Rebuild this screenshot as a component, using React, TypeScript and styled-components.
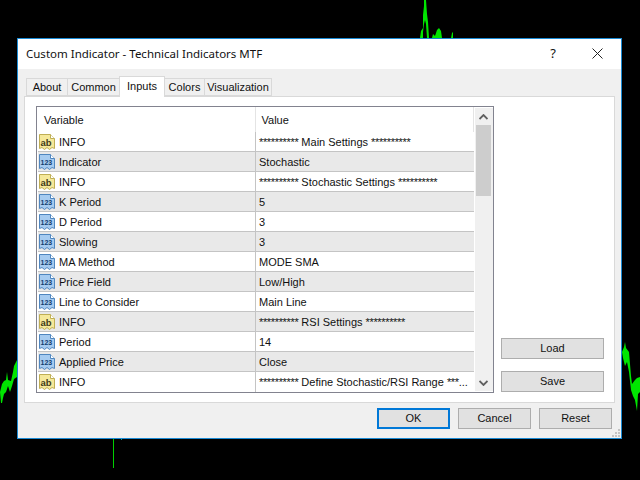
import styled, { createGlobalStyle } from "styled-components";

type Row = { kind: "ab" | "num"; name: string; value: string };

const rows: Row[] = [
  { kind: "ab", name: "INFO", value: "********** Main Settings **********" },
  { kind: "num", name: "Indicator", value: "Stochastic" },
  { kind: "ab", name: "INFO", value: "********** Stochastic Settings **********" },
  { kind: "num", name: "K Period", value: "5" },
  { kind: "num", name: "D Period", value: "3" },
  { kind: "num", name: "Slowing", value: "3" },
  { kind: "num", name: "MA Method", value: "MODE SMA" },
  { kind: "num", name: "Price Field", value: "Low/High" },
  { kind: "num", name: "Line to Consider", value: "Main Line" },
  { kind: "ab", name: "INFO", value: "********** RSI Settings **********" },
  { kind: "num", name: "Period", value: "14" },
  { kind: "num", name: "Applied Price", value: "Close" },
  { kind: "ab", name: "INFO", value: "********** Define Stochastic/RSI Range ***..." },
];

const tabs = [
  { label: "About", width: 42 },
  { label: "Common", width: 53 },
  { label: "Inputs", width: 46 },
  { label: "Colors", width: 41 },
  { label: "Visualization", width: 68 },
];

const TypeIcon = ({ kind }: { kind: Row["kind"] }) => {
  const ab = kind === "ab";
  const edge = ab ? "#bfae55" : "#4f86bf";
  return (
    <IconSvg width="16" height="16" viewBox="0 0 16 16">
      <path
        d="M0.5 0.5H11.5L15.5 4.5V14.5L13 13.5L10.5 15.5L8 13.5L5.5 15.5L3 13.5L0.5 14.5Z"
        fill={ab ? "#f5e89a" : "#a6cbf0"}
        stroke={edge}
      />
      <path d="M11.5 0.5V4.5H15.5" fill="#fff" stroke={edge} />
      {ab ? (
        <IconLabel x="1.5" y="11.5" fontSize="9.5" fill="#3f3a18">
          ab
        </IconLabel>
      ) : (
        <IconLabel x="1.5" y="11" fontSize="7" fill="#123d6e">
          123
        </IconLabel>
      )}
    </IconSvg>
  );
};

// the asterisk runs are tighter in the original font
const ValueText = ({ text }: { text: string }) => (
  <>
    {text.split(/(\*+)/).map((part, i) =>
      part.startsWith("*") ? <Stars key={i}>{part}</Stars> : <span key={i}>{part}</span>
    )}
  </>
);

export default function App() {
  return (
    <>
      <GlobalStyle />
      <Desktop>
        <Chart viewBox="0 0 640 480" width="640" height="480">
          <path
            d="M420 38L421 31L423 28L423 15L424 6L424 0L426 0L427 14L428 22L429 38H427L426 24L425 20L424 24L423 32V38ZM432 38L433 34L435 36L437 30L439 28L441 31L442 38ZM451 38L452 33L453 32V38Z"
            fill="#00e600"
          />
          <path
            d="M1 403L0 392L2 384L4 381L6 380L7 372L8 380L11 381L13 372L14 366L16 362L17 360V377L14 379L12 386L10 392L8 386L6 392L4 394L3 398L2 403Z"
            fill="#00e600"
          />
          <path
            d="M622 352L624 347L625 342L626 348L629 352L630 364L631 376L632 384L635 380L637 378L640 377V392L638 394L637 411L635 400L633 396L631 390L629 372L627 362L625 366L623 358Z"
            fill="#00e600"
          />
          <path d="M113.5 438V468" stroke="#00d000" fill="none" />
          <path d="M121 439h1v1h-1z" fill="#00a0a0" />
        </Chart>
        <Dialog>
          <TitleBar>
            <TitleText>Custom Indicator - Technical Indicators MTF</TitleText>
            <HelpGlyph>?</HelpGlyph>
            <CloseIcon width="11" height="11" viewBox="0 0 11 11">
              <path d="M0.5 0.5L10.5 10.5M10.5 0.5L0.5 10.5" stroke="#222" fill="none" />
            </CloseIcon>
          </TitleBar>
          <Body>
            <TabStrip>
              {tabs.map((tab) => (
                <Tab key={tab.label} $width={tab.width} $active={tab.label === "Inputs"}>
                  {tab.label}
                </Tab>
              ))}
            </TabStrip>
            <Panel>
              <Table>
                <Grid>
                  <HeaderRow>
                    <HeaderCell $w={218}>Variable</HeaderCell>
                    <HeaderCell $w={219}>Value</HeaderCell>
                  </HeaderRow>
                  {rows.map((row, i) => (
                    <DataRow key={i} $shaded={i % 2 === 1} $last={i === rows.length - 1}>
                      <NameCell>
                        <TypeIcon kind={row.kind} />
                        <span>{row.name}</span>
                      </NameCell>
                      <ValueCell>
                        <ValueText text={row.value} />
                      </ValueCell>
                    </DataRow>
                  ))}
                </Grid>
                <Scrollbar>
                  <ArrowBox>
                    <svg width="9" height="6" viewBox="0 0 9 6">
                      <path d="M0.5 5L4.5 1L8.5 5" stroke="#606060" strokeWidth="1.8" fill="none" />
                    </svg>
                  </ArrowBox>
                  <Thumb />
                  <Track />
                  <ArrowBox>
                    <svg width="9" height="6" viewBox="0 0 9 6">
                      <path d="M0.5 1L4.5 5L8.5 1" stroke="#606060" strokeWidth="1.8" fill="none" />
                    </svg>
                  </ArrowBox>
                </Scrollbar>
              </Table>
              <SideButtons>
                <Button $w={103}>Load</Button>
                <Button $w={103}>Save</Button>
              </SideButtons>
            </Panel>
            <Footer>
              <Button $w={73} $primary>
                OK
              </Button>
              <Button $w={73}>Cancel</Button>
              <Button $w={73}>Reset</Button>
            </Footer>
            <Grip width="10" height="10" viewBox="0 0 10 10">
              <path d="M7 1h2v2H7zM4 4h2v2H4zM7 4h2v2H7zM1 7h2v2H1zM4 7h2v2H4zM7 7h2v2H7z" fill="#c4c4c4" />
            </Grip>
          </Body>
        </Dialog>
      </Desktop>
    </>
  );
}

const GlobalStyle = createGlobalStyle`
  html, body {
    margin: 0;
    background: #000;
  }
  * {
    box-sizing: border-box;
  }
`;

const Desktop = styled.div`
  position: relative;
  width: 640px;
  height: 480px;
  overflow: hidden;
  background: #000;
  font-family: "Liberation Sans", Arial, sans-serif;
  font-size: 11px;
  color: #111;
`;

const Chart = styled.svg`
  position: absolute;
  left: 0;
  top: 0;
`;

const IconSvg = styled.svg`
  flex: none;
  display: block;
`;

const IconLabel = styled.text`
  font-family: "Liberation Sans", Arial, sans-serif;
  font-weight: 700;
`;

const Stars = styled.span`
  letter-spacing: -0.35px;
`;

const Dialog = styled.div`
  position: absolute;
  left: 17px;
  top: 38px;
  width: 605px;
  height: 401px;
  border: 1px solid #1a8ad4;
  display: flex;
  flex-direction: column;
  background: #f0f0f0;
`;

const TitleBar = styled.div`
  height: 30px;
  background: #fff;
  display: flex;
  align-items: center;
  padding: 0 18px 2px 8px;
`;

const TitleText = styled.div`
  flex: 1;
  font-family: "Noto Sans", sans-serif;
  font-size: 11.5px;
`;

const HelpGlyph = styled.div`
  font-family: "Noto Sans", sans-serif;
  font-size: 13px;
  margin-right: 36px;
`;

const CloseIcon = styled.svg`
  display: block;
`;

const Body = styled.div`
  position: relative;
  flex: 1;
  display: flex;
  flex-direction: column;
  padding: 9px 6px 0;
`;

const TabStrip = styled.div`
  display: flex;
  height: 18px;
  padding-left: 2px;
  position: relative;
  z-index: 1;
`;

const Tab = styled.div<{ $width: number; $active?: boolean }>`
  width: ${(p) => p.$width}px;
  height: ${(p) => (p.$active ? "21px" : "18px")};
  margin-top: ${(p) => (p.$active ? "-2px" : "0")};
  padding-bottom: ${(p) => (p.$active ? "3px" : "0")};
  display: flex;
  align-items: center;
  justify-content: center;
  background: ${(p) => (p.$active ? "#fff" : "#f0f0f0")};
  border: 1px solid #d9d9d9;
  border-bottom: ${(p) => (p.$active ? "none" : "1px solid #d9d9d9")};
  margin-right: -1px;
`;

const Panel = styled.div`
  width: 591px;
  height: 307px;
  background: #fff;
  border: 1px solid #d9d9d9;
  padding: 9px 10px 9px 11px;
  display: flex;
  justify-content: space-between;
`;

const Table = styled.div`
  width: 458px;
  height: 287px;
  border: 1px solid #82838f;
  display: flex;
`;

const Grid = styled.div`
  width: 437px;
  display: flex;
  flex-direction: column;
  padding-left: 1px;
`;

const HeaderRow = styled.div`
  height: 25px;
  display: flex;
`;

const HeaderCell = styled.div<{ $w: number }>`
  width: ${(p) => p.$w}px;
  padding: 1px 0 0 6px;
  display: flex;
  align-items: center;
  border-right: 1px solid #e4e4e4;
`;

const DataRow = styled.div<{ $shaded: boolean; $last: boolean }>`
  height: 20px;
  display: flex;
  background: ${(p) => (p.$shaded ? "#e9e9e9" : "#fff")};
  border-bottom: ${(p) => (p.$last ? "none" : "1px solid #c4c4c4")};
`;

const NameCell = styled.div`
  flex: none;
  width: 218px;
  display: flex;
  align-items: center;
  gap: 4px;
  padding-left: 1px;
  border-right: 1px solid #c4c4c4;
`;

const ValueCell = styled.div`
  flex: 1;
  min-width: 0;
  padding-left: 3px;
  display: flex;
  align-items: center;
  white-space: pre;
  overflow: hidden;
`;

const Scrollbar = styled.div`
  width: 19px;
  margin: 1px 0 1px 1px;
  padding: 0 2px 0 1px;
  display: flex;
  flex-direction: column;
  background: #f0f0f0;
`;

const ArrowBox = styled.div`
  height: 17px;
  display: flex;
  align-items: center;
  justify-content: center;
`;

const Thumb = styled.div`
  height: 71px;
  background: #cdcdcd;
`;

const Track = styled.div`
  flex: 1;
`;

const SideButtons = styled.div`
  align-self: flex-end;
  display: flex;
  flex-direction: column;
  gap: 12px;
  margin-bottom: 1px;
`;

const Button = styled.div<{ $w: number; $primary?: boolean }>`
  width: ${(p) => p.$w}px;
  height: 21px;
  padding-bottom: 1px;
  display: flex;
  align-items: center;
  justify-content: center;
  background: #e1e1e1;
  border: ${(p) => (p.$primary ? "2px solid #0078d7" : "1px solid #adadad")};
`;

const Footer = styled.div`
  display: flex;
  justify-content: flex-end;
  gap: 8px;
  margin-top: 5px;
  padding-right: 3px;
`;

const Grip = styled.svg`
  position: absolute;
  right: 0;
  bottom: 0;
`;
